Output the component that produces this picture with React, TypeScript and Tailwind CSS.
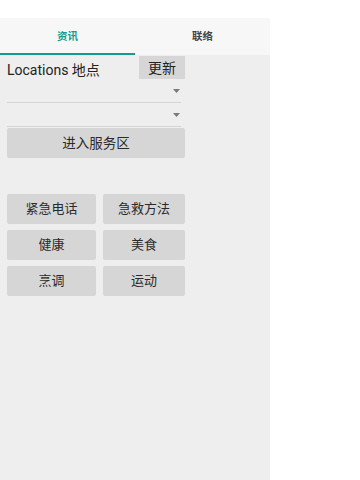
import React from 'react';

const font = { fontFamily: 'Roboto, "Noto Sans CJK SC", sans-serif' };

const Spinner = () => (
  <div className="w-[174px] h-[24px] border-b border-[#d4d4d4] flex items-center justify-end pr-[1px]">
    <svg width="7" height="4" viewBox="0 0 7 4" className="mt-[1px]">
      <path d="M0 0 L7 0 L3.5 4 Z" fill="#7a7a7a" />
    </svg>
  </div>
);

const GridButton = ({ label, wide }: { label: string; wide?: boolean }) => (
  <button className={`${wide ? 'w-[89px]' : 'w-[82px]'} h-[30px] bg-[#d6d6d6] rounded-[2px] text-[13px] text-[#2a2a2a]`}>
    {label}
  </button>
);

export default function App() {
  const rows = [
    ['紧急电话', '急救方法'],
    ['健康', '美食'],
    ['烹调', '运动'],
  ];

  return (
    <div className="w-[360px] h-[480px] bg-white pt-[18px]" style={font}>
      <div className="w-[270px] h-[462px] bg-[#eeeeee] flex flex-col">
        <div className="flex h-[37px] bg-[#f7f7f7]">
          <div className="flex-1 flex items-center justify-center pt-[2px] text-[10.5px] font-semibold text-[#169a8c] border-b-2 border-[#169a8c]">
            资讯
          </div>
          <div className="flex-1 flex items-center justify-center text-[10.5px] font-semibold text-[#444444]">
            联络
          </div>
        </div>

        <div className="ml-[7px] w-[178px] flex flex-col">
          <div className="flex justify-between items-start pt-[1px]">
            <span className="text-[14px] text-[#222222] mt-[5px] leading-[18px]">Locations 地点</span>
            <button className="w-[46px] h-[23px] bg-[#d6d6d6] text-[14px] text-[#222222] leading-none">更新</button>
          </div>
          <Spinner />
          <Spinner />
          <button className="mt-[1px] w-[178px] h-[30px] bg-[#d6d6d6] rounded-[2px] text-[13.5px] text-[#2a2a2a]">
            进入服务区
          </button>

          <div className="mt-[36px] flex flex-col gap-[6px]">
            {rows.map(([a, b]) => (
              <div key={a} className="flex gap-[7px]">
                <GridButton label={a} wide />
                <GridButton label={b} />
              </div>
            ))}
          </div>
        </div>
      </div>
    </div>
  );
}
